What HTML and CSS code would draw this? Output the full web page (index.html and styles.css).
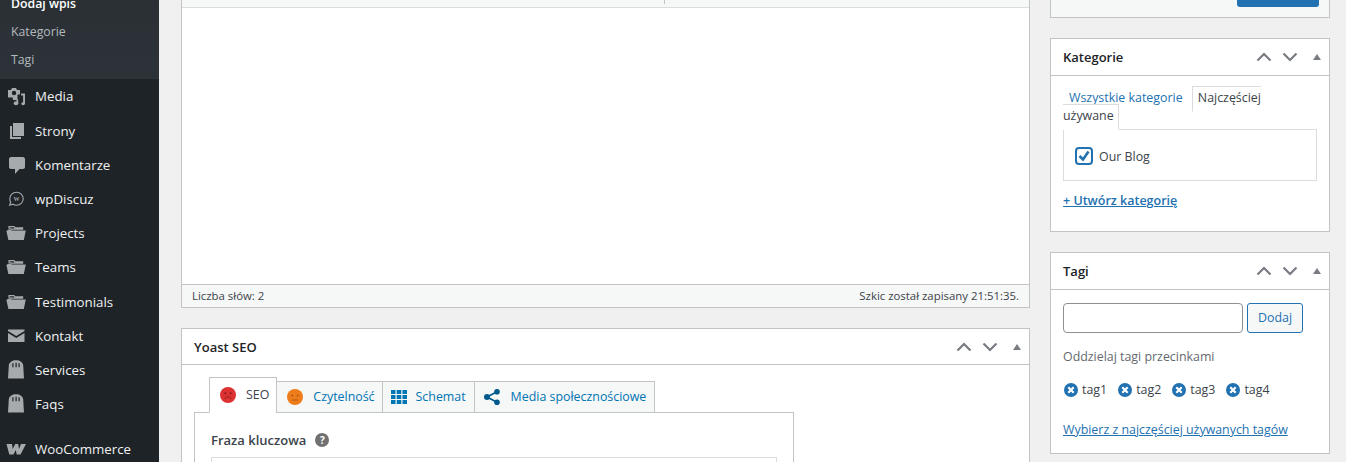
FILE: index.html
```html
<!DOCTYPE html>
<html lang="pl">
<head>
<meta charset="utf-8">
<title>Dodaj wpis</title>
<link rel="stylesheet" href="styles.css">
</head>
<body>
<svg class="defs" width="0" height="0" aria-hidden="true">
  <symbol id="folder" viewBox="0 0 20 16"><path d="M3 3.200V1.600h5l1 1.200h7.600v1.400H5.200L3 3.200z" fill="none" stroke="currentColor" stroke-width="1.200"/><path d="M2.600 4.600h2l1 1h14.200L17.800 15H2.400L.4 6z"/></symbol>
  <symbol id="bag" viewBox="0 0 17 19"><path d="M.5 18.500 1.300 5.500C1.500 2.200 4.700.2 8.500.2s7 2 7.200 5.300l.8 13zM4.800 3.200v4h1.200v-4zM8 2.800v4.400h1.200V2.800zM11 3.200v4h1.200v-4z" fill-rule="evenodd"/></symbol>
  <symbol id="up" viewBox="0 0 16 10"><path d="M1.500 8.500 8 2l6.500 6.500" fill="none" stroke="currentColor" stroke-width="2.200"/></symbol>
  <symbol id="down" viewBox="0 0 16 10"><path d="M1.500 1.500 8 8l6.500-6.500" fill="none" stroke="currentColor" stroke-width="2.200"/></symbol>
  <symbol id="remove" viewBox="0 0 14 14"><circle cx="7" cy="7" r="7"/><path d="M4.300 4.300l5.400 5.400M9.700 4.300l-5.400 5.400" stroke="#fff" stroke-width="2.200" fill="none"/></symbol>
</svg>
<div class="page">
  <nav class="sidebar">
    <ul class="submenu">
      <li class="current">Dodaj wpis</li>
      <li>Kategorie</li>
      <li>Tagi</li>
    </ul>
    <ul class="menu">
      <li><svg class="ico" width="20" height="20" viewBox="0 0 20 20"><path d="M2 4h3l1-2h4l1 2h3v4.500h-2.500V14H6.800v-2.500H2zM8 4.800a2.200 2.200 0 1 0 0 4.400 2.200 2.200 0 0 0 0-4.400z" fill-rule="evenodd"/><path d="M15 7.500h4v10c0 1-.9 1.700-1.900 1.700s-1.800-.7-1.800-1.500.8-1.500 1.800-1.500V9.500H15z"/><ellipse cx="10" cy="17.300" rx="2.300" ry="2"/><path d="M10.500 13.500h1.700v4h-1.700z"/></svg><span>Media</span></li>
      <li><svg class="ico" width="20" height="20" viewBox="0 0 20 20"><path d="M7 2h11v13H7z"/><path d="M4 5h2v11h9v2H4z"/></svg><span>Strony</span></li>
      <li><svg class="ico" width="20" height="20" viewBox="0 0 20 20"><path d="M5 2h12c1 0 2 1 2 2v8c0 1-1 2-2 2h-3.500L9 19v-5H5c-1 0-2-1-2-2V4c0-1 1-2 2-2z"/></svg><span>Komentarze</span></li>
      <li><svg class="ico" width="20" height="20" viewBox="0 0 20 20"><path d="M10.500 3.200c3.700 0 6.700 2.900 6.700 6.500s-3 6.500-6.700 6.500c-1.300 0-2.500-.4-3.500-1l-3.400 1 1.100-2.900a6.300 6.300 0 0 1-.9-3.600c0-3.600 3-6.500 6.700-6.500z" fill="none" stroke="currentColor" stroke-width="1.100"/><text class="ico-w" x="10.500" y="12.300" text-anchor="middle">W</text></svg><span>wpDiscuz</span></li>
      <li><svg class="ico" width="20" height="20" viewBox="0 0 20 20"><use href="#folder" y="2" width="20" height="16"/></svg><span>Projects</span></li>
      <li><svg class="ico" width="20" height="20" viewBox="0 0 20 20"><use href="#folder" y="2" width="20" height="16"/></svg><span>Teams</span></li>
      <li><svg class="ico" width="20" height="20" viewBox="0 0 20 20"><use href="#folder" y="2" width="20" height="16"/></svg><span>Testimonials</span></li>
      <li><svg class="ico" width="20" height="20" viewBox="0 0 20 20"><path d="M2 3.500h16.500v1.500L10.250 10 2 5z"/><path d="M2 7l8.250 5L18.500 7v9H2z"/></svg><span>Kontakt</span></li>
      <li><svg class="ico" width="20" height="20" viewBox="0 0 20 20"><use href="#bag" x="1.500" width="17" height="19"/></svg><span>Services</span></li>
      <li><svg class="ico" width="20" height="20" viewBox="0 0 20 20"><use href="#bag" x="1.500" width="17" height="19"/></svg><span>Faqs</span></li>
      <li class="sep"><svg class="ico" width="20" height="20" viewBox="0 0 20 20"><path d="M.5 5h5.500l.7 5L9.200 5h3l.8 5 2-5h5l-5.500 10.500h-3.800l-.9-4.500-2.300 4.500H3.300z"/></svg><span>WooCommerce</span></li>
    </ul>
  </nav>

  <main class="content">
    <div class="col-main">
      <section class="editor">
        <div class="toolbar"><i class="tool-divider"></i></div>
        <div class="editor-area"></div>
        <div class="statusbar"><span>Liczba słów: 2</span><span>Szkic został zapisany 21:51:35.</span></div>
      </section>

      <section class="panel yoast">
        <header class="panel-head">
          <h2>Yoast SEO</h2>
          <div class="controls"><svg width="16" height="10"><use href="#up"/></svg><svg width="16" height="10"><use href="#down"/></svg><i class="tri"></i></div>
        </header>
        <div class="yoast-body">
          <div class="y-tabs">
            <div class="y-tab active">
              <svg width="16" height="16" viewBox="0 0 16 16"><circle cx="8" cy="8" r="8" fill="#dc3232"/><circle cx="5.300" cy="6.300" r="1.100" fill="#8f1f1f"/><circle cx="10.700" cy="6.300" r="1.100" fill="#8f1f1f"/><path d="M4.800 12c.8-1.500 1.900-2.200 3.200-2.200s2.400.7 3.200 2.200" fill="none" stroke="#8f1f1f" stroke-width="1"/></svg>
              <span>SEO</span>
            </div>
            <div class="y-tab">
              <svg width="16" height="16" viewBox="0 0 16 16"><circle cx="8" cy="8" r="8" fill="#ee7c1b"/><circle cx="5.300" cy="6.500" r="1" fill="#b5590f"/><circle cx="10.700" cy="6.500" r="1" fill="#b5590f"/><path d="M5 11h6" stroke="#b5590f" stroke-width="1"/></svg>
              <span>Czytelność</span>
            </div>
            <div class="y-tab y-tab-schema">
              <svg width="16" height="14" viewBox="0 0 16 14" fill="#0075b3"><path d="M0 0h4.500v4H0zM5.700 0h4.600v4H5.700zM11.500 0H16v4h-4.500zM0 5h4.500v4H0zM5.700 5h4.600v4H5.700zM11.500 5H16v4h-4.500zM0 10h4.500v4H0zM5.700 10h4.600v4H5.700zM11.500 10H16v4h-4.500z"/></svg>
              <span>Schemat</span>
            </div>
            <div class="y-tab y-tab-social">
              <svg width="16" height="16" viewBox="0 0 16 16" fill="#005a8c"><circle cx="3" cy="8" r="3"/><circle cx="13" cy="2.800" r="2.800"/><circle cx="13" cy="13.200" r="2.800"/><path d="M3 8l10-5.200M3 8l10 5.200" stroke="#005a8c" stroke-width="1.600"/></svg>
              <span>Media społecznościowe</span>
            </div>
          </div>
          <div class="y-content">
            <div class="y-label"><strong>Fraza kluczowa</strong><span class="help">?</span></div>
            <div class="y-input"></div>
          </div>
        </div>
      </section>
    </div>

    <aside class="col-side">
      <section class="publish"><div class="btn-primary"></div></section>

      <section class="panel">
        <header class="panel-head">
          <h2>Kategorie</h2>
          <div class="controls"><svg width="16" height="10"><use href="#up"/></svg><svg width="16" height="10"><use href="#down"/></svg><i class="tri"></i></div>
        </header>
        <div class="panel-body cats">
          <ul class="cat-tabs"><li class="cat-link">Wszystkie kategorie</li> <li class="cat-active">Najczęściej używane</li></ul>
          <div class="cat-list">
            <span class="check"><svg width="14" height="14" viewBox="0 0 14 14"><path d="M2.500 7 6 10.500l5.500-8" fill="none" stroke="#2271b1" stroke-width="2.600"/></svg></span>
            <span class="cat-name">Our Blog</span>
          </div>
          <a class="add-cat">+ Utwórz kategorię</a>
        </div>
      </section>

      <section class="panel">
        <header class="panel-head">
          <h2>Tagi</h2>
          <div class="controls"><svg width="16" height="10"><use href="#up"/></svg><svg width="16" height="10"><use href="#down"/></svg><i class="tri"></i></div>
        </header>
        <div class="panel-body tags">
          <div class="tag-add"><div class="tag-input"></div><div class="btn-secondary">Dodaj</div></div>
          <p class="hint">Oddzielaj tagi przecinkami</p>
          <ul class="tag-list">
            <li><svg width="14" height="14"><use href="#remove"/></svg>tag1</li>
            <li><svg width="14" height="14"><use href="#remove"/></svg>tag2</li>
            <li><svg width="14" height="14"><use href="#remove"/></svg>tag3</li>
            <li><svg width="14" height="14"><use href="#remove"/></svg>tag4</li>
          </ul>
          <a class="tag-link">Wybierz z najczęściej używanych tagów</a>
        </div>
      </section>
    </aside>
  </main>
</div>
</body>
</html>
```

FILE: styles.css
```css
* { box-sizing: border-box; }
html, body { margin: 0; height: 462px; overflow: hidden; }
body { background: #f0f0f1; color: #3c434a; font: 13px/18px "Open Sans", "Noto Sans", sans-serif; }
ul { list-style: none; margin: 0; padding: 0; }
p, h2 { margin: 0; }
.defs { position: absolute; }

.page { display: flex; height: 462px; overflow: hidden; }

.sidebar { width: 159px; flex: none; background: #1d2327; color: #f0f0f1; }
.submenu { margin-top: -10px; background: linear-gradient(#2a2f34, #2c3338); color: #b4b9be; font-size: 12.300px; border-bottom: 1px solid #2f353a; height: 89px; }
.submenu li { height: 28px; line-height: 28px; padding-left: 11px; }
.submenu .current { color: #fff; font-weight: 600; }
.menu { padding-top: .4px; }
.menu li { display: flex; align-items: center; height: 34.200px; font-size: 13.300px; color: #f0f0f1; }
.menu .sep { margin-top: 11px; }
.ico { flex: none; margin-left: 6px; margin-right: 9px; fill: #a7aaad; color: #a7aaad; }
.ico-w { font: 700 6px "Liberation Serif", serif; }

.content { flex: 1; display: flex; gap: 20px; padding-left: 22px; align-items: flex-start; min-width: 0; }
.col-main { width: 849px; flex: none; }
.col-side { width: 280px; flex: none; }

.editor { border: 1px solid #c3c4c7; border-top: 0; background: #fff; }
.toolbar { position: relative; height: 8px; background: #f6f7f7; border-bottom: 1px solid #dcdcde; }
.tool-divider { position: absolute; left: 482px; top: 0; width: 1px; height: 4px; background: #c3c4c7; }
.editor-area { height: 277px; background: #fff; border-bottom: 1px solid #c3c4c7; }
.statusbar { display: flex; justify-content: space-between; height: 22px; padding: 0 10px; background: #f6f7f7; font-size: 11.400px; line-height: 22px; color: #3c434a; }

.panel { background: #fff; border: 1px solid #c3c4c7; margin-bottom: 20px; }
.panel-head { display: flex; justify-content: space-between; align-items: center; height: 37px; border-bottom: 1px solid #c3c4c7; padding-left: 12px; }
.panel-head h2 { font-size: 13px; font-weight: 600; color: #1d2327; line-height: 18px; }
.controls { display: flex; align-items: center; gap: 10px; padding-right: 8px; color: #787c82; }
.tri { width: 0; height: 0; margin-left: 5px; border: 4px solid transparent; border-top: 0; border-bottom: 6px solid #787c82; }

.yoast { margin-top: 20px; margin-bottom: 0; }
.yoast .panel-head { height: 36px; }
.yoast-body { padding: 12px 12px 0; height: 200px; }
.y-tabs { display: flex; align-items: flex-end; margin-left: 15px; position: relative; z-index: 1; margin-bottom: -1px; }
.y-tab { display: flex; align-items: center; gap: 10px; height: 32px; padding: 0 7px 0 10px; border: 1px solid #c3c4c7; margin-left: -1px; background: #f6f7f7; color: #0075b3; font-size: 12.400px; }
.y-tab:first-child { margin-left: 0; }
.y-tab.active { height: 36px; background: #fff; color: #3c434a; border-bottom-color: #fff; }
.y-tab-schema { gap: 9px; padding: 0 8px; }
.y-tab-social { gap: 11px; padding: 0 8px 0 9px; }
.y-content { width: 600px; height: 120px; border: 1px solid #c3c4c7; background: #fff; padding: 17px 16px; }
.y-label { display: flex; align-items: center; gap: 9px; height: 20px; }
.y-label strong { font-weight: 600; color: #3c434a; }
.help { width: 14px; height: 14px; border-radius: 50%; background: #707070; color: #fff; font-size: 10px; font-weight: 700; line-height: 14px; text-align: center; }
.y-input { height: 40px; margin-top: 7px; border: 1px solid #dcdcde; }

.publish { height: 18px; margin-bottom: 20px; padding-right: 10px; display: flex; justify-content: flex-end; align-items: flex-start; background: #f6f7f7; border: 1px solid #c3c4c7; border-top: 0; }
.btn-primary { width: 82px; height: 7px; background: #2271b1; border-radius: 0 0 3px 3px; }

.panel-body { padding: 0 12px; }
.cats { height: 155px; padding-top: 13px; }
.cat-tabs { width: 210px; height: 40px; font-size: 12.400px; }
.cat-tabs li { display: inline; }
.cat-link { padding: 0 6px 0 6px; color: #2271b1; }
.cat-active { padding: 2px 4px 5px 5px; background: #fff; border: 1px solid #dcdcde; border-bottom-color: #fff; color: #3c434a; position: relative; }
.cat-list { display: flex; align-items: center; gap: 6px; height: 52px; padding: 2px 0 0 11px; border: 1px solid #dcdcde; font-size: 12.400px; }
.check { display: flex; align-items: center; justify-content: center; width: 18px; height: 18px; border: 2.500px solid #2271b1; border-radius: 4px; }
.cat-name { padding-top: 1px; }
.add-cat { display: block; margin-top: 11px; color: #2271b1; text-decoration: underline; font-weight: 600; font-size: 12.500px; }

.tags { height: 163px; padding-top: 13px; }
.tag-add { display: flex; gap: 4px; }
.tag-input { width: 180px; height: 30px; border: 1px solid #8c8f94; border-radius: 4px; }
.btn-secondary { width: 56px; height: 30px; border: 1px solid #2271b1; border-radius: 3px; background: #f6f7f7; color: #2271b1; text-align: center; line-height: 28px; font-size: 12.400px; }
.hint { margin-top: 15px; color: #646970; font-size: 12.400px; }
.tag-list { display: flex; gap: 11px; margin: 15px 0 0 1px; font-size: 12.400px; }
.tag-list li { display: flex; align-items: center; gap: 4px; }
.tag-list svg { fill: #2271b1; }
.tag-link { display: block; margin-top: 22px; color: #2271b1; text-decoration: underline; font-size: 12.400px; }
```
